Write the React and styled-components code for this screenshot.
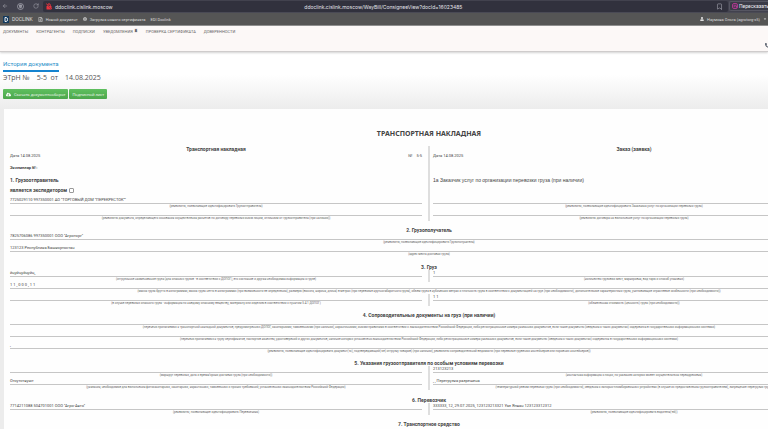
import React from "react";
import styled, { createGlobalStyle } from "styled-components";
import { ArrowLeft, RotateCw, Bookmark } from "lucide-react";
import { FaUser, FaPhoneAlt, FaCloudDownloadAlt, FaRegFileAlt, FaGlobe, FaCaretDown } from "react-icons/fa";

const GlobalStyle = createGlobalStyle`
  *, *::before, *::after { box-sizing: border-box; }
  body {
    margin: 0;
    background: #ececec;
    color: #444;
    font-family: Roboto, "Liberation Sans", sans-serif;
    font-size: 4px;
    overflow: hidden;
  }
  p, h1, h2, h3 { margin: 0; }
  svg { display: block; flex: none; }
`;

const Page = styled.div`
  min-height: 100vh;
  overflow: hidden;
`;

const BrowserBar = styled.div`
  display: flex;
  height: 13px;
  background: #42424e;
  border-bottom: 1px solid #4a4a55;
  color: #e4e4ea;
  font-family: Inter, Roboto, sans-serif;
  font-size: 5px;
`;

const BrowserTools = styled.div`
  display: flex;
  align-items: center;
  gap: 9px;
  width: 43px;
  padding-left: 2px;
`;

const IconButton = styled.button`
  display: flex;
  padding: 0;
  border: 0;
  background: none;
  color: #a9a9b3;
`;

const AddressBar = styled.div`
  flex: 1;
  display: flex;
  align-items: center;
  gap: 3px;
  margin-top: 1px;
  padding: 0 5px 0 3px;
  border-radius: 2px;
  background: #31313d;
`;

const PageAddress = styled.span`
  flex: 1;
  text-align: center;
  padding-right: 62px;
`;

const SummaryButton = styled.button`
  display: flex;
  align-items: center;
  gap: 1px;
  width: 39px;
  margin: 1px 0 1px 1px;
  padding: 0 0 0 2px;
  border: 1px solid #565662;
  border-right: 0;
  border-radius: 2px 0 0 2px;
  background: #3b3b47;
  color: #f0f0f4;
  font: 5px Roboto, sans-serif;
  white-space: nowrap;
`;

const AppBar = styled.nav`
  display: flex;
  align-items: center;
  height: 13px;
  padding: 0 1px 0 3px;
  background: #555;
  border-bottom: 1px solid #8a8a8a;
  gap: 5px;
`;

const AppLink = styled.a`
  display: flex;
  align-items: center;
  gap: 3px;
  color: #dedede;
  text-decoration: none;
  font-size: ${(p) => (p.$brand ? 5 : 4)}px;
  margin-left: ${(p) => (p.$end ? "auto" : 0)};
`;

const Header = styled.header`
  position: relative;
  display: flex;
  justify-content: space-between;
  height: 26px;
  background: #fcf8f7;
  border-bottom: 1px solid #cfcccc;
  box-shadow: 0 1px 2px #d4d4d4;
`;

const Menu = styled.ul`
  display: flex;
  gap: 8px;
  margin: 0;
  padding: 3px;
  list-style: none;
`;

const MenuItem = styled.li`
  display: flex;
  gap: 1px;
  height: 6px;
`;

const MenuLink = styled.a`
  color: #666;
  font-size: 4px;
  line-height: 6px;
  text-decoration: none;
`;

const Badge = styled.span`
  width: 4px;
  height: 5px;
  margin-top: -1px;
  border-radius: 2px;
  background: #eee9e8;
  color: #333;
  font-size: 4px;
  font-weight: 700;
  line-height: 5px;
  text-align: center;
`;

const PhoneLink = styled.a`
  align-self: flex-end;
  margin: 0 -2px 3px 0;
  color: #4b5563;
`;

const DocumentHead = styled.section`
  height: 57px;
  padding: 8px 3px 0;
  background: linear-gradient(#fff 40%, #ececec);
  font-family: "Open Sans", "Noto Sans", sans-serif;
`;

const HistoryLink = styled.a`
  display: inline-block;
  height: 12px;
  border-bottom: 2px solid #1583cf;
  color: #2b8fc9;
  font-family: Roboto, sans-serif;
  font-size: 6px;
  line-height: 8px;
  text-decoration: none;
  vertical-align: top;
`;

const DocumentTitle = styled.h1`
  display: flex;
  gap: 7px;
  color: #555;
  font-size: 7px;
  font-weight: 400;
  line-height: 9px;
  margin-top: 1px;
`;

const Actions = styled.div`
  display: flex;
  gap: 1px;
  margin-top: 7px;
`;

const ActionButton = styled.button`
  display: flex;
  align-items: center;
  gap: 3px;
  height: 10px;
  padding: 0 3px;
  border: 0;
  border-radius: 1px;
  background: linear-gradient(#5fbf5f, #4ca64c);
  color: #fff;
  font: 4px "Open Sans", sans-serif;
  white-space: nowrap;
`;

const Sheet = styled.main`
  min-width: 850px;
  margin-left: 4px;
  padding: 20px 6px;
  background: #fefefe;
`;

const SheetTitle = styled.h2`
  font: 700 7px/10px "Noto Sans", "Open Sans", sans-serif;
  text-align: center;
  margin-bottom: 7px;
`;

const Split = styled.div`
  display: grid;
  grid-template-columns: 1fr 1fr;
`;

const Column = styled.div`
  display: flex;
  flex-direction: column;
  min-width: 0;
  padding-right: 7px;

  & + & {
    margin-left: -1px;
    padding: 0 13px 0 3px;
    border-left: 2px solid #dedede;
  }
`;

const ColumnTitle = styled.h3`
  font-size: 5px;
  line-height: 6px;
  text-align: center;
`;

const DateRow = styled.div`
  display: flex;
  justify-content: space-between;
  margin-bottom: 6px;
  font-size: 4px;
  line-height: 7px;
`;

const DocumentNumber = styled.span`
  display: flex;
  gap: 4px;
`;

const CopyNumber = styled.p`
  margin-bottom: 6px;
  font-size: 4px;
  font-weight: 700;
  line-height: 6px;
`;

const PartyTitle = styled.h3`
  font-size: 5px;
  line-height: 7px;
`;

const CustomerTitle = styled(PartyTitle)`
  margin-top: 12px;
  font-family: "Liberation Sans", sans-serif;
  font-weight: 400;
`;

const CheckLabel = styled.label`
  display: flex;
  align-items: center;
  gap: 2px;
  margin: 2px 0 3px;
  font-size: 5px;
  font-weight: 700;
  line-height: 8px;
`;

const Checkbox = styled.input`
  appearance: none;
  width: 5px;
  height: 5px;
  margin: 0;
  border: 1px solid #999;
  border-radius: 1px;
  background: #fff;
`;

const FieldGroup = styled.div`
  margin-top: auto;
`;

const SectionTitle = styled.h3`
  padding-top: ${(p) => (p.$roomy ? 7 : 6)}px;
  font-size: 5px;
  line-height: 6px;
  text-align: center;
`;

const FieldBox = styled.div`
  height: 12px;
  white-space: nowrap;
`;

const FieldValue = styled.p`
  height: 7px;
  border-bottom: 1px solid #c6c6c6;
  font-size: 4px;
  line-height: 5px;
`;

const FieldHint = styled.p`
  display: flex;
  justify-content: center;
  color: #666;
  font-size: 3px;
  line-height: 5px;
`;

function Field({ value, hint }) {
  return (
    <FieldBox>
      <FieldValue>{value}</FieldValue>
      <FieldHint>{hint}</FieldHint>
    </FieldBox>
  );
}

function SplitFields({ left, right }) {
  return (
    <Split>
      <Column>{left.map((f) => <Field key={f.hint} {...f} />)}</Column>
      <Column>{right.map((f) => <Field key={f.hint} {...f} />)}</Column>
    </Split>
  );
}

const menu = [
  { label: "ДОКУМЕНТЫ" },
  { label: "КОНТРАГЕНТЫ" },
  { label: "ПОДПИСКИ" },
  { label: "УВЕДОМЛЕНИЯ", count: 8 },
  { label: "ПРОВЕРКА СЕРТИФИКАТА" },
  { label: "ДОВЕРЕННОСТИ" },
];

function ProtectIcon() {
  return (
    <svg width="7" height="7" viewBox="0 0 14 14" fill="none" stroke="currentColor" strokeWidth="1.5">
      <circle cx="7" cy="7" r="6" />
      <path d="M5 4h4v4.500L7 10.500 5 8.500zM7 4v6" />
    </svg>
  );
}

function InsecureIcon() {
  return (
    <svg width="6" height="7" viewBox="0 0 12 14">
      <path d="M3.500 6V4a2.500 2.500 0 0 1 5 0v2" fill="none" stroke="#e8343f" strokeWidth="2" />
      <rect x="1" y="6" width="10" height="7" rx="1" fill="#e8343f" />
      <path d="M0 2l12 11" stroke="#31313d" strokeWidth="1" />
      <path d="M0 1l12 11" stroke="#e8343f" strokeWidth="1.500" />
    </svg>
  );
}

function SummaryIcon() {
  return (
    <svg width="6" height="6" viewBox="0 0 12 12" fill="none" stroke="#d13aa5" strokeWidth="1.500">
      <rect x="1" y="1" width="10" height="10" rx="3" />
      <path d="M3 4.500h6M3 7.500h4M8 6l2 1.500L8 9" />
    </svg>
  );
}

function DoclinkLogo() {
  return (
    <svg width="6" height="7" viewBox="0 0 12 14">
      <rect width="12" height="14" fill="#143a5e" />
      <path d="M4 3h2.500a2.500 4 0 0 1 0 8H4z" fill="none" stroke="#fff" strokeWidth="1.800" />
    </svg>
  );
}

export default function App() {
  return (
    <Page>
      <GlobalStyle />
      <BrowserBar>
        <BrowserTools>
          <IconButton aria-label="Назад"><ArrowLeft size={6} /></IconButton>
          <IconButton aria-label="Защита"><ProtectIcon /></IconButton>
          <IconButton aria-label="Обновить"><RotateCw size={6} /></IconButton>
        </BrowserTools>
        <AddressBar>
          <InsecureIcon />
          <span>ddoclink.cislink.moscow</span>
          <PageAddress>ddoclink.cislink.moscow/WayBill/ConsigneeView?docId=16023485</PageAddress>
          <IconButton aria-label="Закладка"><Bookmark size={7} /></IconButton>
        </AddressBar>
        <SummaryButton><SummaryIcon />Пересказать</SummaryButton>
      </BrowserBar>

      <AppBar>
        <AppLink href="#" $brand><DoclinkLogo />DOCLINK</AppLink>
        <AppLink href="#"><FaRegFileAlt size={5} />Новый документ</AppLink>
        <AppLink href="#"><FaGlobe size={4} />Загрузка нового сертификата</AppLink>
        <AppLink href="#">EDI Doclink</AppLink>
        <AppLink href="#" $end><FaUser size={4} />Наумова Ольга (agrotorg-x5)<FaCaretDown size={4} /></AppLink>
      </AppBar>

      <Header>
        <Menu>
          {menu.map((m) => (
            <MenuItem key={m.label}>
              <MenuLink href="#">{m.label}</MenuLink>
              {m.count && <Badge>{m.count}</Badge>}
            </MenuItem>
          ))}
        </Menu>
        <PhoneLink href="#" aria-label="Позвонить"><FaPhoneAlt size={5} /></PhoneLink>
      </Header>

      <DocumentHead>
        <HistoryLink href="#">История документа</HistoryLink>
        <DocumentTitle>
          <span>ЭТрН №</span><span>5-5&nbsp; от</span><span>14.08.2025</span>
        </DocumentTitle>
        <Actions>
          <ActionButton><FaCloudDownloadAlt size={5} />Скачать документооборот</ActionButton>
          <ActionButton>Подписной лист</ActionButton>
        </Actions>
      </DocumentHead>

      <Sheet>
        <SheetTitle>ТРАНСПОРТНАЯ НАКЛАДНАЯ</SheetTitle>
        <Split>
          <Column>
            <ColumnTitle>Транспортная накладная</ColumnTitle>
            <DateRow>
              <span>Дата 14.08.2025</span>
              <DocumentNumber><span>№</span><span>5-5</span></DocumentNumber>
            </DateRow>
            <CopyNumber>Экземпляр №:</CopyNumber>
            <PartyTitle>1. Грузоотправитель</PartyTitle>
            <CheckLabel>является экспедитором<Checkbox type="checkbox" /></CheckLabel>
            <FieldGroup>
              <Field
                value={'7725029110 997350001 АО "ТОРГОВЫЙ ДОМ "ПЕРЕКРЕСТОК""'}
                hint="(реквизиты, позволяющие идентифицировать Грузоотправителя)"
              />
              <Field hint="(реквизиты документа, определяющего основания осуществления расчетов по договору перевозки иным лицом, отличным от грузоотправителя (при наличии))" />
            </FieldGroup>
          </Column>
          <Column>
            <ColumnTitle>Заказ (заявка)</ColumnTitle>
            <DateRow><span>Дата 14.08.2025</span></DateRow>
            <CustomerTitle>1а Заказчик услуг по организации перевозки груза (при наличии)</CustomerTitle>
            <FieldGroup>
              <Field hint="(реквизиты, позволяющие идентифицировать Заказчика услуг по организации перевозки груза)" />
              <Field hint="(реквизиты договора на выполнение услуг по организации перевозки груза)" />
            </FieldGroup>
          </Column>
        </Split>

        <SectionTitle>2. Грузополучатель</SectionTitle>
        <Field value={'7825706086 997350001 ООО "Агроторг"'} hint="(реквизиты, позволяющие идентифицировать Грузополучателя)" />
        <Field value="123123 Республика Башкортостан" hint="(адрес места доставки груза)" />

        <SectionTitle $roomy>3. Груз</SectionTitle>
        <SplitFields
          left={[{ value: "йцуйцуйцуйц,", hint: "(отгрузочное наименование груза (для опасных грузов - в соответствии с ДОПОГ), его состояние и другая необходимая информация о грузе)" }]}
          right={[{ value: "1", hint: "(количество грузовых мест, маркировка, вид тары и способ упаковки)" }]}
        />
        <Field
          value="1 1 , 0 0 0 , 1 1"
          hint="(масса груза брутто в килограммах, масса груза нетто в килограммах (при возможности ее определения), размеры (высота, ширина, длина) в метрах (при перевозке крупногабаритного груза), объем груза в кубических метрах и плотность груза в соответствии с документацией на груз (при необходимости), дополнительные характеристики груза, учитывающие отраслевые особенности (при необходимости))"
        />
        <SplitFields
          left={[{ hint: "(в случае перевозки опасного груза - информация по каждому опасному веществу, материалу или изделию в соответствии с пунктом 5.4.1 ДОПОГ)" }]}
          right={[{ value: "1 1", hint: "(объявленная стоимость (ценность) груза (при необходимости))" }]}
        />

        <SectionTitle>4. Сопроводительные документы на груз (при наличии)</SectionTitle>
        <Field hint="(перечень прилагаемых к транспортной накладной документов, предусмотренных ДОПОГ, санитарными, таможенными (при наличии), карантинными, иными правилами в соответствии с законодательством Российской Федерации, либо регистрационные номера указанных документов, если такие документы (сведения о таких документах) содержатся в государственных информационных системах)" />
        <Field hint="(перечень прилагаемых к грузу сертификатов, паспортов качества, удостоверений и других документов, наличие которых установлено законодательством Российской Федерации, либо регистрационные номера указанных документов, если такие документы (сведения о таких документах) содержатся в государственных информационных системах)" />
        <Field value="," hint="(реквизиты, позволяющие идентифицировать документ(-ы), подтверждающий(-ие) отгрузку товаров) (при наличии), реквизиты сопроводительной ведомости (при перевозке груженых контейнеров или порожних контейнеров))" />

        <SectionTitle>5. Указания грузоотправителя по особым условиям перевозки</SectionTitle>
        <SplitFields
          left={[
            { hint: "(маршрут перевозки, дата и время/сроки доставки груза (при необходимости))" },
            { value: "Отсутствуют", hint: "(указания, необходимые для выполнения фитосанитарных, санитарных, карантинных, таможенных и прочих требований, установленных законодательством Российской Федерации)" },
          ]}
          right={[
            { value: "213123213", hint: "(контактная информация о лицах, по указанию которых может осуществляться переадресовка)" },
            { value: ", , Перегрузка разрешена", hint: "(температурный режим перевозки груза (при необходимости), сведения о запорно-пломбировочных устройствах (в случае их предоставления грузоотправителем), запрещение перегрузки груза)" },
          ]}
        />

        <SectionTitle $roomy>6. Перевозчик</SectionTitle>
        <SplitFields
          left={[{ value: '7714211088 504701001 ООО "Агро-Авто"', hint: "(реквизиты, позволяющие идентифицировать Перевозчика)" }]}
          right={[{ value: "333333, 12, 29.07.2025, 123123213321 Уаз Япван 123123312312", hint: "(реквизиты, позволяющие идентифицировать водителя(-ей))" }]}
        />

        <SectionTitle>7. Транспортное средство</SectionTitle>
      </Sheet>
    </Page>
  );
}
